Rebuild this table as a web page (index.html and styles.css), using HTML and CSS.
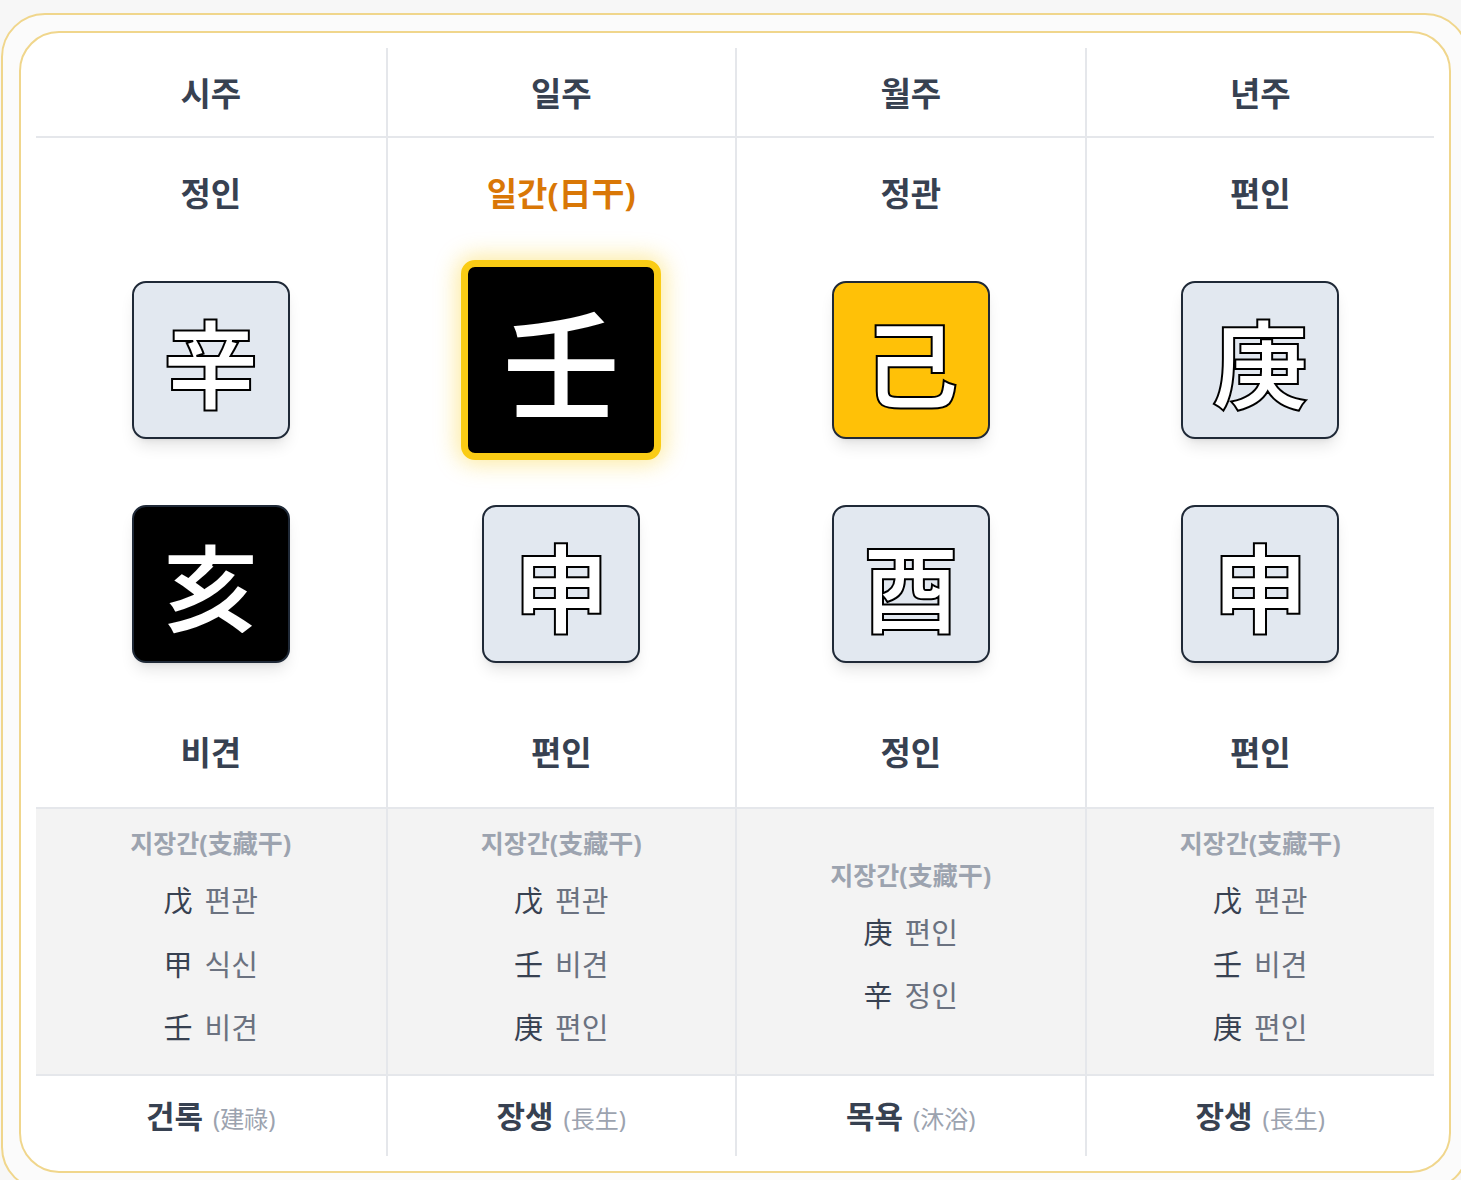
FILE: index.html
```html
<!DOCTYPE html>
<html lang="ko">
<head>
<meta charset="utf-8">
<title>사주 원국</title>
<link rel="stylesheet" href="styles.css">
</head>
<body>
<div class="outer">
  <div class="card">
    <div class="grid">
      <div class="cell head">시주</div>
      <div class="cell head">일주</div>
      <div class="cell head">월주</div>
      <div class="cell head">년주</div>

      <div class="cell main">
        <div class="god">정인</div>
        <div class="slot first"><div class="gz light">辛</div></div>
        <div class="slot second"><div class="gz dark">亥</div></div>
        <div class="god bottom">비견</div>
      </div>
      <div class="cell main">
        <div class="god day">일간(日干)</div>
        <div class="slot first"><div class="gz daybox">壬</div></div>
        <div class="slot second"><div class="gz light">申</div></div>
        <div class="god bottom">편인</div>
      </div>
      <div class="cell main">
        <div class="god">정관</div>
        <div class="slot first"><div class="gz yellow">己</div></div>
        <div class="slot second"><div class="gz light">酉</div></div>
        <div class="god bottom">정인</div>
      </div>
      <div class="cell main">
        <div class="god">편인</div>
        <div class="slot first"><div class="gz light">庚</div></div>
        <div class="slot second"><div class="gz light">申</div></div>
        <div class="god bottom">편인</div>
      </div>

      <div class="cell hidden">
        <div class="hlabel">지장간(支藏干)</div>
        <div class="entry"><span class="hj">戊</span><span class="kr">편관</span></div>
        <div class="entry"><span class="hj">甲</span><span class="kr">식신</span></div>
        <div class="entry"><span class="hj">壬</span><span class="kr">비견</span></div>
      </div>
      <div class="cell hidden">
        <div class="hlabel">지장간(支藏干)</div>
        <div class="entry"><span class="hj">戊</span><span class="kr">편관</span></div>
        <div class="entry"><span class="hj">壬</span><span class="kr">비견</span></div>
        <div class="entry"><span class="hj">庚</span><span class="kr">편인</span></div>
      </div>
      <div class="cell hidden">
        <div class="hlabel">지장간(支藏干)</div>
        <div class="entry"><span class="hj">庚</span><span class="kr">편인</span></div>
        <div class="entry"><span class="hj">辛</span><span class="kr">정인</span></div>
      </div>
      <div class="cell hidden">
        <div class="hlabel">지장간(支藏干)</div>
        <div class="entry"><span class="hj">戊</span><span class="kr">편관</span></div>
        <div class="entry"><span class="hj">壬</span><span class="kr">비견</span></div>
        <div class="entry"><span class="hj">庚</span><span class="kr">편인</span></div>
      </div>

      <div class="cell foot"><span class="fk">건록</span><span class="fh">(建祿)</span></div>
      <div class="cell foot"><span class="fk">장생</span><span class="fh">(長生)</span></div>
      <div class="cell foot"><span class="fk">목욕</span><span class="fh">(沐浴)</span></div>
      <div class="cell foot"><span class="fk">장생</span><span class="fh">(長生)</span></div>
    </div>
  </div>
</div>
</body>
</html>
```

FILE: styles.css
```css
html, body {
  margin: 0;
  overflow: hidden;
}

body {
  padding: 13px 0 0 1px;
  background: #f7f7f7;
  font-family: "Noto Sans", "Noto Sans CJK KR", sans-serif;
}

.outer {
  width: 1468px;
  box-sizing: border-box;
  border: 2px solid #f0d68c;
  border-radius: 44px;
  padding: 16px;
  background: #fbfbfb;
}

.card {
  background: #ffffff;
  border: 2px solid #f0d68c;
  border-radius: 40px;
  padding: 15px;
}

.grid {
  display: grid;
  grid-template-columns: repeat(4, 1fr);
}

.cell {
  text-align: center;
  min-width: 0;
}

.cell:not(:nth-child(4n+1)) {
  border-left: 2px solid #e5e7eb;
}

.head {
  height: 88px;
  display: flex;
  align-items: center;
  justify-content: center;
  font-size: 33px;
  font-weight: 700;
  color: #374151;
  border-bottom: 2px solid #e5e7eb;
}

.main {
  padding: 32px 0 30px;
  border-bottom: 2px solid #e5e7eb;
}

.god {
  font-size: 33px;
  font-weight: 700;
  line-height: 48px;
  color: #374151;
}

.god.day {
  color: #d97706;
}

.slot {
  height: 158px;
  display: flex;
  justify-content: center;
  align-items: center;
}

.slot.first {
  margin-top: 63px;
}

.slot.second {
  margin-top: 66px;
}

.god.bottom {
  margin-top: 66px;
}

.gz {
  width: 158px;
  height: 158px;
  flex: none;
  box-sizing: border-box;
  border: 2px solid #1f2937;
  border-radius: 14px;
  display: flex;
  align-items: center;
  justify-content: center;
  font-family: "Noto Sans CJK KR", sans-serif;
  font-size: 96px;
  font-weight: 700;
  line-height: 1;
  color: #ffffff;
  -webkit-text-stroke: 2px #000000;
  box-shadow: 0 10px 15px -3px rgba(0, 0, 0, 0.1), 0 4px 6px -4px rgba(0, 0, 0, 0.1);
}

.gz.light {
  background: #e2e8f0;
}

.gz.dark {
  background: #000000;
}

.gz.yellow {
  background: #ffc107;
}

.gz.daybox {
  width: 200px;
  height: 200px;
  background: #000000;
  border: 7px solid #facc15;
  border-radius: 14px;
  font-size: 118px;
  box-shadow: 0 0 22px 4px rgba(250, 204, 21, 0.4);
}

.hidden {
  height: 265px;
  background: #f3f3f3;
  border-bottom: 2px solid #e5e7eb;
  display: flex;
  flex-direction: column;
  justify-content: center;
}

.hlabel {
  font-size: 25px;
  font-weight: 700;
  line-height: 36px;
  color: #9ca3af;
  margin-bottom: 6px;
}

.entry {
  height: 63.5px;
  display: flex;
  align-items: center;
  justify-content: center;
  gap: 12px;
  font-size: 29px;
}

.entry .hj {
  color: #374151;
}

.entry .kr {
  color: #6b7280;
}

.foot {
  height: 80px;
  display: flex;
  align-items: baseline;
  justify-content: center;
  gap: 10px;
  padding-top: 20px;
  box-sizing: border-box;
}

.fk {
  font-size: 31px;
  font-weight: 700;
  color: #374151;
  line-height: 40px;
}

.fh {
  font-size: 24px;
  color: #9ca3af;
}
```
